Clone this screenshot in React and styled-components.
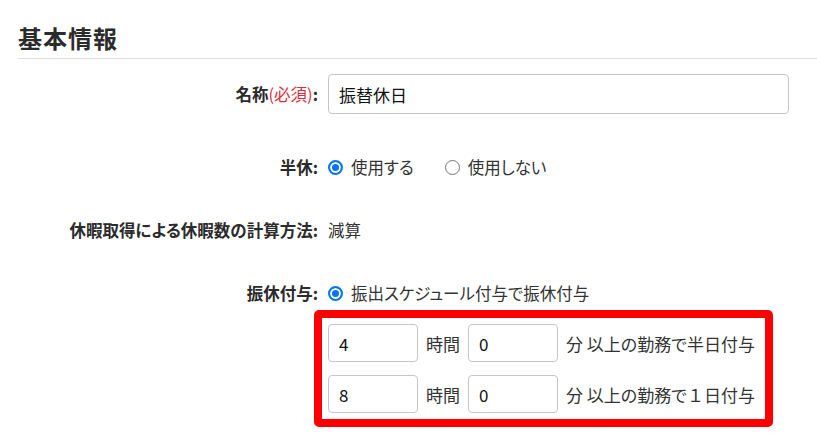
import React from 'react';
import styled, { createGlobalStyle } from 'styled-components';

const GlobalStyle = createGlobalStyle`
  html, body {
    margin: 0;
    padding: 0;
    background: #fff;
  }
  body {
    font-family: "Noto Sans CJK JP", "Noto Sans", sans-serif;
    color: #333;
    font-feature-settings: "palt";
  }
`;

const Page = styled.div`
  padding-top: 22px;
  padding-left: 18px;
`;

const Heading = styled.h2`
  margin: 0;
  font-size: 24px;
  font-weight: bold;
  line-height: 32px;
  padding-bottom: 4px;
  border-bottom: 1px solid #dedede;
  color: #2b2b2b;
  letter-spacing: 1px;
`;

const Form = styled.div`
  display: flex;
  flex-direction: column;
  padding-right: 28px;
`;

const Row = styled.div`
  display: grid;
  grid-template-columns: 300px 1fr;
  column-gap: 10px;
  align-items: center;
  margin-top: ${p => p.$space}px;
  min-height: ${p => p.$height || 30}px;
`;

const Label = styled.div`
  text-align: right;
  font-weight: bold;
  font-size: 16.5px;
  color: #2b2b2b;
  white-space: nowrap;
`;

const Required = styled.span`
  color: #dc2f3c;
  font-weight: normal;
`;

const Value = styled.div`
  font-size: 16.5px;
  color: #333;
  display: flex;
  align-items: center;
  white-space: nowrap;
`;

const TextInput = styled.input`
  box-sizing: border-box;
  width: ${p => p.$width || '100%'};
  height: ${p => p.$height || 38}px;
  padding: 0 10px;
  border: 1px solid #c6c6c6;
  border-radius: 4px;
  font-family: "Noto Sans CJK JP", "Noto Sans", sans-serif;
  font-feature-settings: "palt";
  font-size: 17px;
  color: #111;
  background: #fff;
  outline: none;
`;

const RadioLabel = styled.label`
  display: inline-flex;
  align-items: center;
  gap: 8px;
  margin-right: ${p => p.$gap || 0}px;
`;

const Radio = styled.input`
  appearance: none;
  box-sizing: border-box;
  width: 15px;
  height: 15px;
  margin: 0;
  border-radius: 50%;
  border: 1.5px solid #767676;
  background: #fff;

  &:checked {
    border: 2px solid #0075ff;
    box-shadow: inset 0 0 0 2px #fff;
    background: #0075ff;
  }
`;

const Highlight = styled.div`
  justify-self: start;
  margin-left: -14px;
  border: 8px solid #ff0000;
  border-radius: 5px;
  padding: 6px 10px 6px 6px;
  display: flex;
  flex-direction: column;
  gap: 13px;
`;

const DurationRow = styled.div`
  display: flex;
  align-items: center;
  font-size: 17px;
  color: #333;
  white-space: nowrap;
`;

const Unit = styled.span`
  margin: 0 ${p => p.$right ?? 8}px 0 8px;
`;

const Wide = styled.span`
  font-feature-settings: normal;
`;

function Duration({ hours, children }) {
  return (
    <DurationRow>
      <TextInput $width="90px" $height={38} defaultValue={hours} />
      <Unit>時間</Unit>
      <TextInput $width="90px" $height={38} defaultValue="0" />
      <Unit $right={0}>分 以上の勤務で{children}</Unit>
    </DurationRow>
  );
}

export default function App() {
  return (
    <>
      <GlobalStyle />
      <Page>
        <Heading>基本情報</Heading>
        <Form>
          <Row $space={15} $height={40}>
            <Label>名称<Required>(必須)</Required>:</Label>
            <TextInput $height={40} defaultValue="振替休日" />
          </Row>
          <Row $space={38}>
            <Label>半休:</Label>
            <Value>
              <RadioLabel $gap={31}>
                <Radio type="radio" name="half" defaultChecked />
                使用する
              </RadioLabel>
              <RadioLabel>
                <Radio type="radio" name="half" />
                使用しない
              </RadioLabel>
            </Value>
          </Row>
          <Row $space={33}>
            <Label>休暇取得による休暇数の計算方法:</Label>
            <Value>減算</Value>
          </Row>
          <Row $space={33}>
            <Label>振休付与:</Label>
            <Value>
              <RadioLabel>
                <Radio type="radio" name="grant" defaultChecked />
                振出スケジュール付与で振休付与
              </RadioLabel>
            </Value>
          </Row>
          <Row $space={2} $height={0}>
            <div />
            <Highlight>
              <Duration hours="4">半日付与</Duration>
              <Duration hours="8"><Wide>１</Wide>日付与</Duration>
            </Highlight>
          </Row>
        </Form>
      </Page>
    </>
  );
}
